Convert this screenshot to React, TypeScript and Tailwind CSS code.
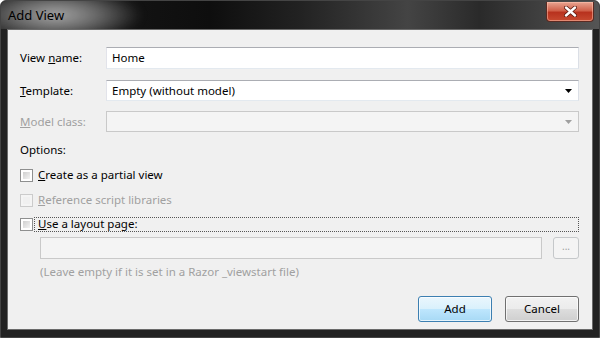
import type { ReactNode } from "react";

const font = { fontFamily: '"Segoe UI", "Noto Sans", "Open Sans", sans-serif' };

function Field({ value, disabled, arrow }: { value?: string; disabled?: boolean; arrow?: boolean }) {
  return (
    <div
      className={`flex h-full flex-1 items-center border pl-[5px] pr-[6px] ${
        disabled
          ? "border-[#c9c9c9] bg-[#f4f4f4]"
          : "border-[#abadb3] border-b-[#e3e9ef] border-r-[#dbdfe6] border-l-[#e2e3ea] bg-white"
      }`}
    >
      <span className="flex-1 truncate text-black">{value}</span>
      {arrow ? (
        <svg width="7" height="4" viewBox="0 0 7 4">
          <path d="M0 0h7L3.5 4z" fill={disabled ? "#a0a0a0" : "#000"} />
        </svg>
      ) : null}
    </div>
  );
}

function Row({ label, disabled, children, className }: { label: ReactNode; disabled?: boolean; children: ReactNode; className: string }) {
  return (
    <div className={`flex items-center ${className}`}>
      <span className={`w-[86px] shrink-0 ${disabled ? "text-[#a0a0a0]" : "text-black"}`}>{label}</span>
      {children}
    </div>
  );
}

function Check({ label, disabled, focused, className }: { label: ReactNode; disabled?: boolean; focused?: boolean; className: string }) {
  return (
    <div className={`flex items-center ${className}`}>
      <span
        className={`h-[13px] w-[13px] shrink-0 border p-[2px] ${
          disabled ? "border-[#cbcbcb] bg-[#f4f4f4]" : "border-[#8e8f8f] bg-white"
        }`}
      >
        <span
          className={`block h-full w-full ${
            disabled ? "bg-[#f0f0f0]" : "bg-gradient-to-br from-[#cfcfcf] to-[#f4f4f4]"
          }`}
        />
      </span>
      <span
        className={`ml-[1px] flex h-[15px] items-center pl-[3px] ${
          focused ? "flex-1 border border-dotted border-[#555]" : "border border-transparent"
        } ${disabled ? "text-[#a0a0a0]" : "text-black"}`}
      >
        {label}
      </span>
    </div>
  );
}

export default function App() {
  return (
    <div
      className="relative flex h-[338px] w-[600px] flex-col overflow-hidden rounded-t-[6px] border border-[#444] bg-[#222] text-[11.5px]"
      style={font}
    >
      {/* title bar */}
      <div className="relative flex h-[28px] shrink-0 items-start justify-between overflow-hidden bg-[linear-gradient(90deg,#1a1a1a_0%,#0e0e0e_35%,#222_50%,#444_68%,#2a2a2a_80%,#555_100%)]">
        <div className="absolute left-[-30px] top-[-14px] h-[56px] w-[170px] rounded-full bg-[radial-gradient(ellipse_at_center,rgba(175,175,175,0.95)_0%,rgba(140,140,140,0.7)_35%,rgba(60,60,60,0)_72%)] blur-[4px]" />
        <span className="relative ml-[7px] mt-[5px] text-[13px] text-black">Add View</span>
        <div className="relative mr-[5px] mt-[1px] flex h-[20px] w-[48px] items-center justify-center rounded-b-[4px] border border-t-0 border-[#5a2a22] bg-[linear-gradient(180deg,#e9a592_0%,#d0614a_45%,#b8321e_55%,#c74a30_100%)] shadow-[inset_0_0_0_1px_rgba(255,200,180,0.5)]">
          <svg width="13" height="11" viewBox="0 0 13 11">
            <path d="M2 1.5l9 8M11 1.5l-9 8" stroke="#5a1a10" strokeWidth="4" strokeLinecap="round" />
            <path d="M2 1.5l9 8M11 1.5l-9 8" stroke="#fff" strokeWidth="2.4" strokeLinecap="round" />
          </svg>
        </div>
      </div>

      {/* client area */}
      <div className="mx-[6px] flex h-[301px] flex-col border border-[#6a6a6a] bg-[#f0f0f0] pl-[12px] pr-[13px]">
        <Row label={<>View <u>n</u>ame:</>} className="mt-[17px] h-[22px]">
          <Field value="Home" />
        </Row>
        <Row label={<><u>T</u>emplate:</>} className="mt-[11px] h-[21px]">
          <Field value="Empty (without model)" arrow />
        </Row>
        <Row label={<><u>M</u>odel class:</>} disabled className="mt-[10px] h-[21px]">
          <Field disabled arrow />
        </Row>
        <div className="mt-[10px] flex h-[16px] items-center text-black">Options:</div>
        <Check label={<><u>C</u>reate as a partial view</>} className="mt-[9px] h-[16px]" />
        <Check label={<><u>R</u>eference script libraries</>} disabled className="mt-[9px] h-[16px]" />
        <Check label={<><u>U</u>se a layout page:</>} focused className="mt-[8px] h-[16px]" />
        <div className="ml-[20px] mt-[5px] flex h-[22px] gap-[11px]">
          <Field disabled />
          <div className="flex w-[26px] items-center justify-center rounded-[3px] border border-[#c5c8ca] bg-[#f4f4f4] pb-[3px] text-[10px] text-[#a0a0a0]">
            ...
          </div>
        </div>
        <div className="ml-[20px] mt-[5px] flex h-[16px] items-center text-[#a0a0a0]">
          (Leave empty if it is set in a Razor _viewstart file)
        </div>
        <div className="mt-[16px] flex h-[26px] justify-end gap-[13px]">
          <button
            type="button"
            className="w-[74px] rounded-[3px] border border-[#3c7fb1] bg-[linear-gradient(180deg,#eaf6fd_0%,#d9f0fc_50%,#bee6fd_51%,#a7d9f5_100%)] text-black shadow-[inset_0_0_0_1px_rgba(255,255,255,0.7)]"
          >
            Add
          </button>
          <button
            type="button"
            className="w-[74px] rounded-[3px] border border-[#707070] bg-[linear-gradient(180deg,#f2f2f2_0%,#ebebeb_50%,#dddddd_51%,#cfcfcf_100%)] text-black shadow-[inset_0_0_0_1px_rgba(255,255,255,0.7)]"
          >
            Cancel
          </button>
        </div>
      </div>
    </div>
  );
}
